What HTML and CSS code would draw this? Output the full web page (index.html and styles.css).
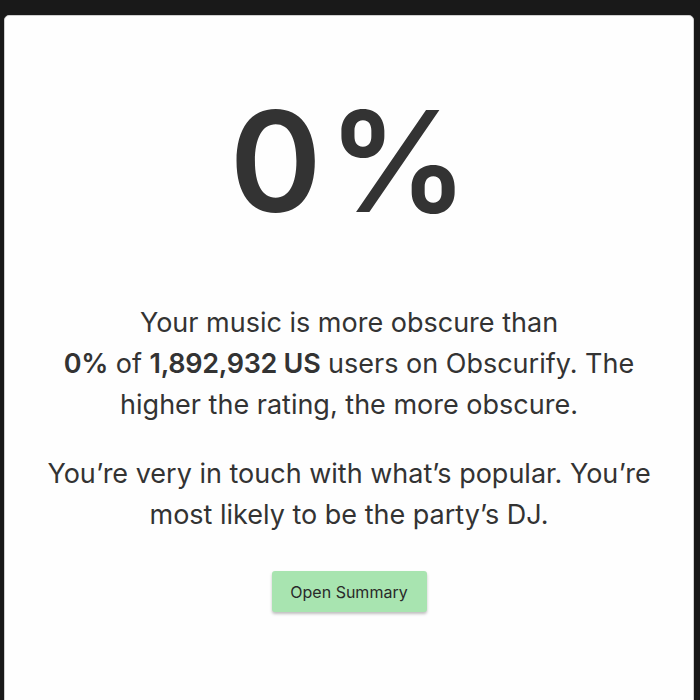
FILE: index.html
```html
<!DOCTYPE html>
<html>
<head>
<meta charset="utf-8">
<link rel="stylesheet" href="styles.css">
</head>
<body>
<main class="card">
  <div class="score">0%</div>
  <p class="text">Your music is more obscure than<br><b>0%</b> of <b>1,892,932 US</b> users on Obscurify. The higher the rating, the more obscure.</p>
  <p class="text">You’re very in touch with what’s popular. You’re most likely to be the party’s DJ.</p>
  <button class="btn">Open Summary</button>
</main>
</body>
</html>
```
FILE: styles.css
```css
html, body {
  margin: 0;
  padding: 0;
  background: #191919;
  height: 700px;
  overflow: hidden;
}
body {
  padding: 15px 6px 0 4px;
  font-family: "Inter", "DejaVu Sans", sans-serif;
  color: #333;
}
.card {
  background: #fefefe;
  border: 1px solid #cfcfcf;
  border-radius: 5px;
  min-height: 720px;
  display: flex;
  flex-direction: column;
  align-items: center;
  padding: 55px 30px 0;
  box-sizing: border-box;
}
.score {
  font-size: 140px;
  font-weight: 600;
  line-height: 180px;
  letter-spacing: 6px;
  margin-right: -6px;
  color: #333;
}
.text {
  margin: 0;
  font-size: 27px;
  line-height: 41px;
  text-align: center;
  max-width: 620px;
  font-weight: 400;
}
.text:first-of-type {
  margin-top: 51px;
}
.text + .text {
  margin-top: 28px;
}
.text b {
  font-weight: 600;
  letter-spacing: -0.3px;
}
.btn {
  margin-top: 36px;
  width: 155px;
  height: 41px;
  border: none;
  border-radius: 3px;
  background: #a8e4b0;
  color: #2a2a2a;
  font-family: inherit;
  font-size: 16px;
  box-shadow: 0 2px 3px rgba(0,0,0,0.25);
}
```
